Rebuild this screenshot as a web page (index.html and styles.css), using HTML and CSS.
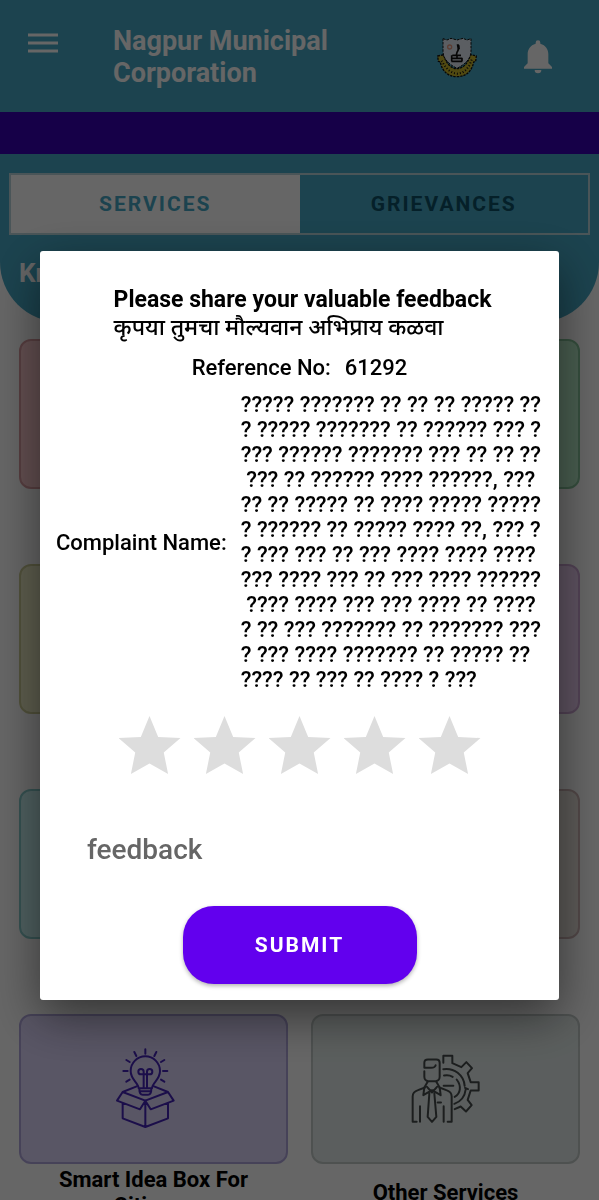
FILE: index.html
```html
<!DOCTYPE html>
<html lang="en">
<head>
    <meta charset="UTF-8">
    <meta name="viewport" content="width=device-width, initial-scale=1.0">
    <title>Nagpur Municipal Corporation</title>
    <link rel="stylesheet" href="styles.css">
</head>
<body>
    <div class="app">
        <header class="header">
            <button class="icon-btn menu-btn" aria-label="Menu">
                <svg width="30" height="20" viewBox="0 0 30 20"><path d="M0 2h30M0 10h30M0 18h30" stroke="#fff" stroke-width="3"/></svg>
            </button>
            <h1>Nagpur Municipal Corporation</h1>
            <svg class="emblem" width="40" height="42" viewBox="0 0 120 126">
                <path d="M2 60l18-4c6 25 22 42 40 42s34-17 40-42l18 4-2 16-6 2c-4 22-18 44-50 44s-46-22-50-44l-6-2z" fill="#c9b72c" stroke="#111" stroke-width="4" stroke-dasharray="7 3"/>
                <path d="M14 74l8 14 12 14 14 9 14 2 14-3 12-9 10-14 6-16" fill="none" stroke="#111" stroke-width="6" stroke-dasharray="3 6"/>
                <path d="M18 8l12 4 12-5 18 5 18-5 12 5 12-4v38c0 20-15 38-42 51-27-13-42-31-42-51z" fill="#e4ecf5" stroke="#111" stroke-width="3" stroke-dasharray="8 3"/>
                <circle cx="38" cy="33" r="6" fill="none" stroke="#e79a80" stroke-width="4"/>
                <path d="M59 25h6l3 4v8l-6 6z" fill="#111"/>
                <path d="M66 35c-1 8-5 10-6 14l-2 8" fill="none" stroke="#111" stroke-width="5"/>
                <path d="M46 58h26M42 67h34M43 76h33M44 58v18M60 58v9M75 66v10" fill="none" stroke="#111" stroke-width="5"/>
            </svg>
            <button class="icon-btn bell-btn" aria-label="Notifications">
                <svg width="28" height="34" viewBox="0 0 84 102"><path d="M35 8a7 7 0 0 1 14 0v3c16 4 24 17 24 32v27l11 11v5H0v-5l11-11V43C11 28 19 15 35 11zM32 90h20a10 10 0 0 1-20 0z" fill="#fff"/></svg>
            </button>
        </header>
        <div class="ticker"></div>
        <section class="panel">
            <div class="tabs">
                <button class="tab active">SERVICES</button>
                <button class="tab">GRIEVANCES</button>
            </div>
            <h2>Know</h2>
        </section>
        <main class="grid">
            <div class="item"><div class="card pink"></div></div>
            <div class="item"><div class="card green"></div></div>
            <div class="item"><div class="card yellow"></div></div>
            <div class="item"><div class="card purple"></div></div>
            <div class="item"><div class="card teal"></div></div>
            <div class="item"><div class="card brown"></div></div>
            <a class="item" href="#idea-box">
                <span class="card violet">
                    <svg width="78" height="84" viewBox="345 200 234 252" fill="none" stroke="#4524b8" stroke-width="6" stroke-linecap="round" stroke-linejoin="round">
                        <path d="M436 207v13M403 215l6 12M469 215l-6 12M379 239l10 6M493 239l-10 6M370 272h13M489 272h13M379 304l10-6M493 304l-10-6"/>
                        <path d="M416 324c0-17-24-25-24-52a44 44 0 0 1 88 0c0 27-24 35-24 52zM418 325c0 12 5 18 10 18h16c5 0 10-6 10-18M419 333h34"/>
                        <path d="M431 322v-48a8 8 0 1 0-8 8h26a8 8 0 1 0-8-8v48"/>
                        <path d="M410 318l-42 17 68 26 68-26-42-17M368 335l-17 26 69 26 16-26 16 26 69-26-17-26M368 369v45l68 26 68-26v-45M436 363v75"/>
                    </svg>
                </span>
                <span class="label">Smart Idea Box For Citizens</span>
            </a>
            <a class="item" href="#other">
                <span class="card grey">
                    <svg width="70" height="72" viewBox="335 225 210 215" fill="none" stroke="#464c4d" stroke-width="6" stroke-linecap="round" stroke-linejoin="round">
                        <path d="M340 431v-76c0-11 7-16 16-19l21-8M340 431h12M362 384v47M457 431v-76c0-11-7-16-16-19l-21-8M457 431h-12M433 384v47"/>
                        <path d="M375 268v-14c0-6 5-10 11-10h25c6 0 10 4 10 10v42c0 8-6 13-12 13h-22c-7 0-12-6-12-13v-17M375 269h20c8 0 13-3 14-8"/>
                        <path d="M385 311l-10 17-3 23 26-15 26 15-3-23-10-17M383 326l15 17 15-17M390 346l-5 70 13 15 13-15-6-70M415 373h10"/>
                        <path d="M432 254v-21h27v22l27 12 15-15 17 18-13 15 9 27h24v25h-24l-9 28 12 16-17 19-16-15-18 8"/>
                        <path d="M432 273a55 55 0 0 1 64 50M497 329l9 4M499 334a52 52 0 0 1-34 43M434 292c10-2 18-1 26 4M472 304c15 19 12 43-6 52M433 323h29"/>
                    </svg>
                </span>
                <span class="label">Other Services</span>
            </a>
        </main>
    </div>

    <div class="overlay">
        <form class="dialog" role="dialog" aria-labelledby="dialogTitle">
            <div class="title" id="dialogTitle">
                <strong>Please share your valuable feedback</strong>
                <p lang="mr">कृपया तुमचा मौल्यवान अभिप्राय कळवा</p>
            </div>
            <div class="reference">
                <span>Reference No:</span>
                <span>61292</span>
            </div>
            <div class="complaint">
                <span class="complaint-name">Complaint Name:</span>
                <p class="complaint-text">????? ??????? ?? ?? ?? ????? ??
? ????? ??????? ?? ?????? ??? ?
??? ?????? ??????? ??? ?? ?? ??
 ??? ?? ?????? ???? ??????, ???
?? ?? ????? ?? ???? ????? ?????
? ?????? ?? ????? ???? ??, ??? ?
? ??? ??? ?? ??? ???? ???? ????
??? ???? ??? ?? ??? ???? ??????
 ???? ???? ??? ??? ???? ?? ????
? ?? ??? ??????? ?? ??????? ???
? ??? ???? ??????? ?? ????? ??
???? ?? ??? ?? ???? ? ???</p>
            </div>
            <div class="stars" role="radiogroup" aria-label="Rating">
                <input type="radio" name="rating" value="1" aria-label="1 star">
                <input type="radio" name="rating" value="2" aria-label="2 stars">
                <input type="radio" name="rating" value="3" aria-label="3 stars">
                <input type="radio" name="rating" value="4" aria-label="4 stars">
                <input type="radio" name="rating" value="5" aria-label="5 stars">
            </div>
            <input class="feedback" type="text" placeholder="feedback" aria-label="feedback">
            <button class="submit" type="submit">SUBMIT</button>
        </form>
    </div>
</body>
</html>
```
FILE: styles.css
```css
* {
    box-sizing: border-box;
}

body {
    margin: 0;
    font-family: Roboto, "Noto Sans Devanagari", "Noto Sans", sans-serif;
    color: #000;
    background: #fff;
}

h1, h2, p {
    margin: 0;
}

button {
    font-family: inherit;
    border: none;
    cursor: pointer;
}

.app {
    height: 100vh;
    overflow: hidden;
}

.header {
    display: flex;
    align-items: center;
    height: 112px;
    padding: 2px 47px 0 28px;
    background: #46a8c5;
}

.icon-btn {
    display: flex;
    padding: 0;
    background: none;
}

.menu-btn {
    margin-bottom: 28px;
}

.header h1 {
    flex: 1;
    max-width: 240px;
    margin-left: 55px;
    font-size: 27px;
    line-height: 32px;
    color: #fff;
}

.emblem {
    margin-left: auto;
}

.bell-btn {
    margin-left: 47px;
}

.ticker {
    height: 42px;
    background: #3700b3;
}

.panel {
    height: 168px;
    padding: 19px 9px 0;
    border-radius: 0 0 60px 60px;
    background: #46a8c5;
}

.tabs {
    display: flex;
    height: 62px;
    border: 2px solid #b8d5dc;
}

.tab {
    flex: 1;
    font-size: 21px;
    font-weight: 700;
    letter-spacing: 2px;
    color: #0d5168;
    background: none;
}

.tab.active {
    color: #46a8c5;
    background: #fff;
}

.panel h2 {
    margin: 22px 10px 0;
    font-size: 26px;
    line-height: 32px;
    color: #fff;
}

.grid {
    display: grid;
    grid-template-columns: 1fr 1fr;
    column-gap: 23px;
    padding: 17px 19px;
}

.item {
    display: block;
    height: 225px;
    color: #000;
    text-decoration: none;
}

.card {
    display: flex;
    align-items: center;
    justify-content: center;
    height: 150px;
    border: 2px solid;
    border-radius: 12px;
}

.pink { background: #f9c6ca; border-color: #d99ba0; }
.green { background: #b8ecc9; border-color: #86c49b; }
.yellow { background: #ececc4; border-color: #cbcb94; }
.purple { background: #eccff2; border-color: #cda6d4; }
.teal { background: #c8f2f2; border-color: #86cccc; }
.brown { background: #eae4de; border-color: #cdb4b4; }
.violet { background: #ded6fc; border-color: #b0a6dc; }
.grey { background: #e4ecea; border-color: #c2cac8; }

.label {
    display: flex;
    align-items: center;
    justify-content: center;
    height: 58px;
    padding: 0 30px;
    font-size: 22px;
    font-weight: 700;
    line-height: 26px;
    text-align: center;
}

.overlay {
    position: fixed;
    inset: 0;
    display: flex;
    align-items: center;
    padding: 51px 40px 0;
    background: rgba(0, 0, 0, 0.6);
}

.dialog {
    display: flex;
    flex-direction: column;
    align-items: center;
    width: 100%;
    padding: 35px 16px 16px;
    border-radius: 3px;
    background: #fff;
    box-shadow: 0 16px 48px rgba(0, 0, 0, 0.5);
}

.title {
    margin-left: 6px;
    font-size: 23px;
    line-height: 28px;
}

.title strong {
    display: block;
}

.title p {
    font-weight: 500;
}

.reference {
    display: flex;
    gap: 14px;
    margin-top: 12px;
    font-size: 22px;
    font-weight: 500;
    line-height: 28px;
}

.complaint {
    display: flex;
    align-items: center;
    gap: 14px;
    width: 100%;
    margin-top: 10px;
    font-size: 22px;
    font-weight: 500;
    line-height: 25px;
    white-space: pre;
}

.stars {
    display: flex;
    gap: 13px;
    margin-top: 24px;
}

.stars input {
    appearance: none;
    width: 62px;
    height: 58px;
    margin: 0;
    background: #ddd;
    clip-path: polygon(50% 0, 64% 36%, 100% 38%, 73% 63%, 80% 100%, 50% 82%, 20% 100%, 27% 63%, 0 38%, 36% 36%);
}

.feedback {
    align-self: stretch;
    height: 64px;
    margin: 43px 31px 0;
    padding: 0;
    border: none;
    outline: none;
    font-family: inherit;
    font-size: 28px;
    font-weight: 500;
    background: none;
}

.feedback::placeholder {
    color: #666;
    opacity: 1;
}

.submit {
    width: 234px;
    height: 78px;
    margin-top: 25px;
    border-radius: 31px;
    font-size: 21px;
    font-weight: 700;
    letter-spacing: 2px;
    color: #fff;
    background: #6200ee;
    box-shadow: 0 2px 4px rgba(0, 0, 0, 0.3);
}
```
